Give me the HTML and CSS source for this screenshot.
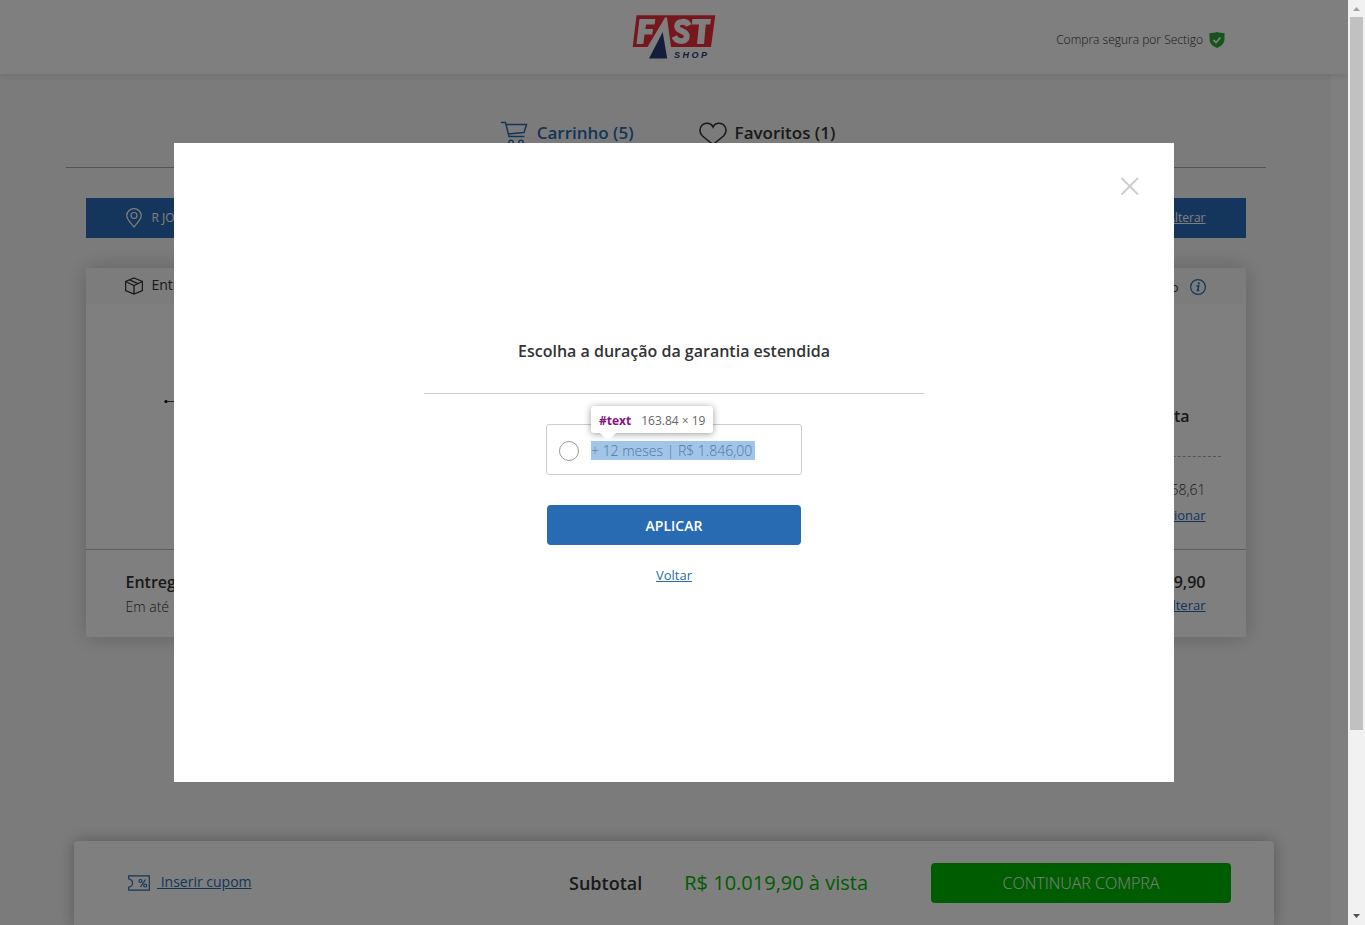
FILE: index.html
```html
<!DOCTYPE html>
<html lang="pt-BR">
<head>
<meta charset="utf-8">
<title>Fast Shop - Carrinho</title>
<link rel="stylesheet" href="styles.css">
</head>
<body>
<div class="window">
  <div class="view">
    <div class="page">
      <header class="header">
        <svg class="logo" viewBox="0 0 84 44" role="img" aria-label="Fast Shop">
          <path d="M4.500 .3H83.300L79 32H.7Z" fill="#ed2d3b"/>
          <path d="M7.500 4H23.300L22.600 9.500H14L13.300 14H21L20.300 19.500H12.500L11.300 29H4.500Z" fill="#fff"/>
          <path d="M33 2.500H35L39 32H15.500Z" fill="#fff"/>
          <path d="M17 43.500L30.700 17L35.200 43.500Z" fill="#293a78"/>
          <path d="M56.800 10.500C54.500 5.200 45 5.600 45 11.300C45 16.800 55 15.300 54.800 21.300C54.600 27.700 45 27.500 42.300 21.500" fill="none" stroke="#fff" stroke-width="5.800"/>
          <path d="M60.500 4H79L78.200 9.500H73.800L72 29H65L67 9.500H59.700Z" fill="#fff"/>
          <text class="logo-word" x="42" y="43">S H O P</text>
        </svg>
        <p class="secure">Compra segura por Sectigo
          <svg width="16" height="16" viewBox="0 0 16 16" aria-hidden="true"><path d="M8 0C10 .8 13 1 15.500 1V7C15.500 11.500 12 14.500 8 16C4 14.500.5 11.500.5 7V1C3 1 6 .8 8 0Z" fill="#2fa936"/><path d="M4.500 8.200L7 10.500L11.500 5.500" fill="none" stroke="#fff" stroke-width="1.800"/></svg>
        </p>
      </header>
      <main class="content">
        <nav class="tabs">
          <a class="tab tab-active" href="#carrinho">
            <svg width="28" height="26" viewBox="0 0 28 26" fill="none" stroke="currentColor" stroke-width="1.500" aria-hidden="true"><path d="M0 1.500H4.500L8 15.500H23.500M5 3.500H25.500L23 11.500L7 13"/><circle cx="10" cy="21.500" r="2.200"/><circle cx="20" cy="21.500" r="2.200"/></svg>
            Carrinho (5)</a>
          <a class="tab" href="#favoritos">
            <svg width="28" height="24" viewBox="0 0 28 24" fill="none" stroke="currentColor" stroke-width="1.600" aria-hidden="true"><path d="M14 6C12 1.500 6 1.200 3 4.300C0 7.500.5 12 3.500 15L14 23.500L24.500 15C27.500 12 28 7.500 25 4.300C22 1.200 16 1.500 14 6Z"/></svg>
            Favoritos (1)</a>
        </nav>
        <section class="address">
          <svg width="16" height="20" viewBox="0 0 16 20" fill="none" stroke="currentColor" stroke-width="1.200" aria-hidden="true"><path d="M8 19C4 14 .7 11 .7 7.800A7.300 7.100 0 0 1 15.300 7.800C15.300 11 12 14 8 19Z"/><circle cx="8" cy="7.500" r="3"/></svg>
          <span>R JOSE</span>
          <a class="address-link" href="#endereco">Alterar</a>
        </section>
        <section class="card">
          <div class="card-head">
            <svg width="18" height="18" viewBox="0 0 18 18" fill="none" stroke="currentColor" stroke-width="1.300" aria-hidden="true"><path d="M9 1L17.400 4.500V13.500L9 17L.6 13.500V4.500ZM.6 4.500L9 8.500L17.400 4.500M9 8.500V17M4.500 2.800L13 6.600"/></svg>
            <span class="card-title">Entrega</span>
            <span class="card-note">Prazo</span>
            <svg class="info" width="16" height="16" viewBox="0 0 16 16" aria-hidden="true"><circle cx="8" cy="8" r="7.400" fill="none" stroke="currentColor" stroke-width="1.200"/><circle cx="8.800" cy="4.400" r="1.100" fill="currentColor"/><path d="M6.500 7H8.700L7.500 11.500H9.300" fill="none" stroke="currentColor" stroke-width="1.500"/></svg>
          </div>
          <div class="product">
            <svg class="thumb-img" width="30" height="6" viewBox="0 0 30 6" aria-hidden="true"><circle cx="2" cy="3.500" r="1.600"/><path d="M3 3.500H30" stroke="#444" stroke-width="1"/></svg>
            <div class="prices">
              <strong class="price">à vista</strong>
              <div class="warranty">
                <span>R$ 58,61</span>
                <a class="small-link" href="#garantia">Adicionar</a>
              </div>
            </div>
          </div>
          <div class="delivery">
            <div class="delivery-col"><strong>Entrega</strong><span>Em até</span></div>
            <div class="delivery-col delivery-end"><strong>R$ 9,90</strong><a class="small-link" href="#entrega">Alterar</a></div>
          </div>
        </section>
      </main>
      <footer class="summary">
        <a class="coupon" href="#cupom">
          <svg width="22" height="16" viewBox="0 0 22 16" fill="none" stroke="currentColor" stroke-width="1.200" aria-hidden="true"><path d="M.7 4V.8H21.300V15.200H.7V12C3 12 4.500 10 4.500 8S3 4 .7 4Z"/><circle cx="12.500" cy="6" r="1.500"/><circle cx="17.200" cy="10.500" r="1.500"/><path d="M17.500 4.500L12.500 12"/></svg>
          <span>&nbsp;Inserir cupom</span></a>
        <span class="subtotal">Subtotal</span>
        <span class="total">R$ 10.019,90 à vista</span>
        <button class="checkout" type="button">CONTINUAR COMPRA</button>
      </footer>
    </div>
    <div class="overlay">
      <div class="modal" role="dialog" aria-labelledby="modal-title">
        <button class="close" type="button" aria-label="Fechar"><svg width="20" height="20" viewBox="0 0 20 20" aria-hidden="true"><path d="M1.500 1L18 17.500M18 1L1.500 17.500" stroke="#ccc" stroke-width="1.800"/></svg></button>
        <h2 class="modal-title" id="modal-title">Escolha a duração da garantia estendida</h2>
        <form class="form">
          <label class="option">
            <input class="radio" type="radio" name="garantia">
            <span class="highlight">+ 12 meses | R$ 1.846,00
              <span class="tooltip"><b>#text</b><span>163.84 × 19</span></span></span>
          </label>
          <button class="apply" type="button">APLICAR</button>
          <a class="small-link back" href="#voltar">Voltar</a>
        </form>
      </div>
    </div>
  </div>
  <div class="scrollbar" aria-hidden="true">
    <svg width="17" height="17" viewBox="0 0 17 17"><path d="M5 11H12L8.500 7Z" fill="#a3a3a3"/></svg>
    <div class="track"><div class="scroll-thumb"></div></div>
    <svg width="17" height="17" viewBox="0 0 17 17"><path d="M5 6H12L8.500 10Z" fill="#505050"/></svg>
  </div>
</div>
</body>
</html>
```
FILE: styles.css
```css
* { box-sizing: border-box; }
body { margin: 0; font-family: "Open Sans", "Noto Sans", sans-serif; font-size: 14px; line-height: 20px; color: #333; overflow: hidden; }
h2, p { margin: 0; }
svg { display: block; flex: none; }
button { border: 0; padding: 0; font-family: inherit; cursor: pointer; }
.window { display: grid; grid-template-columns: 1fr 17px; height: 100vh; }
.view { position: relative; overflow: hidden; }
.page { display: flex; flex-direction: column; height: 100%; background: linear-gradient(to left, #fff 17px, #f7f7f7 17px); }
.header { position: relative; display: grid; grid-template-columns: 1fr auto 1fr; align-items: center; height: 74px; padding: 0 123px; background: #fff; box-shadow: 0 1px 8px rgba(0, 0, 0, .12); }
.logo { grid-column: 2; width: 84px; height: 44px; }
.logo-word { font: italic bold 9px "Liberation Sans", sans-serif; fill: #293a78; }
.secure { display: flex; align-items: center; justify-content: flex-end; gap: 6px; padding-top: 6px; font-size: 12px; font-weight: 300; }
.content { flex: 1; width: 100%; max-width: 1217px; margin: 0 auto; padding-right: 17px; }
.tabs { display: flex; justify-content: center; gap: 65px; height: 94px; padding: 46px 0 0 5px; border-bottom: 1px solid #aaa; }
.tab { display: flex; align-items: flex-start; gap: 8px; height: 28px; font-size: 17px; font-weight: 600; line-height: 26px; color: #333; text-decoration: none; }
.tab svg { margin-top: 1px; }
.tab-active { color: #286bb3; }
.address { display: flex; align-items: center; gap: 10px; height: 40px; margin: 30px 20px; padding: 0 40px; background: #2a6db8; color: #fff; font-size: 12px; }
.address-link { margin-left: auto; color: inherit; font-size: 12px; }
.card { margin: 0 20px; background: #fff; box-shadow: 0 0 20px rgba(0, 0, 0, .2); }
.card-head { display: flex; align-items: center; gap: 9px; height: 36px; padding: 0 40px 0 39px; background: #f8f8f8; }
.card-title { padding-bottom: 2px; font-weight: 500; }
.card-note { margin-left: auto; padding-top: 2px; font-size: 13px; }
.info { color: #286bb3; margin: 2px 0 0 2px; }
.product { display: flex; justify-content: space-between; height: 245px; padding: 94px 25px 0 78px; }
.prices { display: flex; flex-direction: column; width: 240px; text-align: right; padding-top: 7px; }
.price { padding: 0 31px 29px 0; font-size: 16px; font-weight: 600; line-height: 22px; color: #333; border-bottom: 1px dashed #aaa; }
.warranty { display: flex; flex-direction: column; gap: 5px; padding: 23px 15px 0 0; font-weight: 300; }
.small-link { font-size: 13px; font-weight: 400; color: #286bb3; }
.delivery { display: flex; justify-content: space-between; height: 88px; padding: 20px 40px; border-top: 1px solid #bbb; }
.delivery-col { display: flex; flex-direction: column; gap: 3px; font-weight: 300; }
.delivery-col strong { font-size: 16px; font-weight: 600; line-height: 24px; color: #333; }
.delivery-end { gap: 1px; text-align: right; }
.summary { display: flex; align-items: flex-start; width: calc(100% - 148px); max-width: 1200px; height: 84px; margin: 0 auto; padding: 22px 43px 0 54px; background: #fff; border-radius: 4px 4px 0 0; box-shadow: 0 0 16px rgba(0, 0, 0, .3); line-height: 40px; }
.coupon { display: flex; align-items: center; gap: 7px; color: #286bb3; text-decoration: none; }
.coupon span { padding-bottom: 2px; line-height: 38px; text-decoration: underline; }
.subtotal { margin-left: auto; font-size: 18px; font-weight: 600; }
.total { margin: 0 63px 0 42px; font-size: 20px; color: #00b800; }
.checkout { width: 300px; height: 40px; border-radius: 4px; background: #00b800; color: #fff; font-size: 16px; font-weight: 300; }
.overlay { position: absolute; inset: 0; display: grid; place-items: center; background: rgba(0, 0, 0, .5); }
.modal { position: relative; display: flex; flex-direction: column; align-items: center; justify-content: center; width: calc(100% - 40px); max-width: 1000px; min-height: 69vh; background: #fff; }
.close { position: absolute; top: 34px; right: 34px; background: none; }
.modal-title { width: 500px; padding-bottom: 30px; border-bottom: 1px solid #ccc; font-size: 16px; font-weight: 600; line-height: 24px; text-align: center; }
.form { display: flex; flex-direction: column; align-items: center; padding-top: 30px; }
.option { display: flex; align-items: center; gap: 12px; width: 256px; height: 51px; padding: 3px 12px 0; border: 1px solid #ccc; border-radius: 3px; }
.radio { appearance: none; width: 20px; height: 20px; margin: 0; border: 1px solid #999; border-radius: 50%; background: #fff; }
.highlight { position: relative; padding-right: 3px; background: #a0c5e9; color: #50759c; font-weight: 300; line-height: 19px; }
.tooltip { position: absolute; left: 0; bottom: 27px; display: flex; gap: 10px; padding: 5px 8px 3px; background: #fff; border-radius: 3px; box-shadow: 0 1px 7px rgba(0, 0, 0, .4); color: #666; font-size: 12px; font-weight: 400; white-space: nowrap; }
.tooltip b { color: #881280; }
.tooltip::after { content: ""; position: absolute; top: 100%; left: 9px; border: solid transparent; border-width: 8px 8px 0; border-top-color: #fff; }
.apply { width: 254px; height: 40px; margin: 30px 0 20px; padding-top: 2px; border-radius: 4px; background: #286bb3; color: #fff; font-size: 14px; font-weight: 600; }
.back { line-height: 20px; padding-bottom: 2px; }
.scrollbar { display: flex; flex-direction: column; background: #f1f1f1; }
.track { flex: 1; padding: 0 2px; }
.scroll-thumb { height: 80%; background: #c1c1c1; }
```
